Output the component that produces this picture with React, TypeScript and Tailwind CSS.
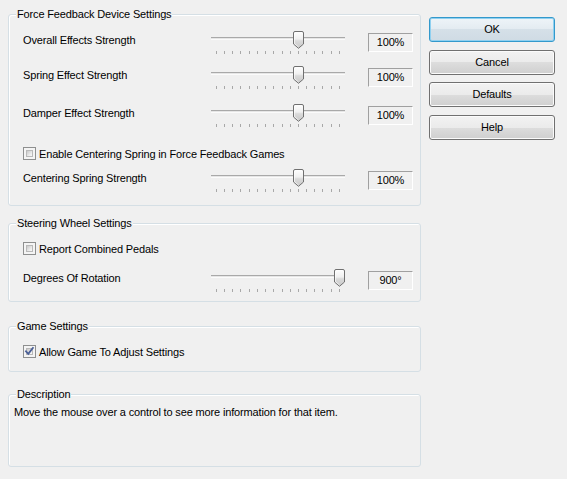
import React from "react";

const TICKS = [5, 13, 21, 29, 38, 46, 54, 62, 71, 79, 87, 95, 103, 111, 120, 128];

function Thumb() {
  return (
    <svg width="11" height="18" viewBox="0 0 11 18" className="absolute top-0">
      <defs>
        <linearGradient id="thg" x1="0" y1="0" x2="0" y2="1">
          <stop offset="0" stopColor="#ffffff" />
          <stop offset="0.45" stopColor="#f0f0f0" />
          <stop offset="0.55" stopColor="#dadada" />
          <stop offset="1" stopColor="#c8c8c8" />
        </linearGradient>
      </defs>
      <path
        d="M0.5 2 Q0.5 0.5 2 0.5 H9 Q10.5 0.5 10.5 2 V13 L5.5 17.3 L0.5 13 Z"
        fill="url(#thg)"
        stroke="#707070"
        strokeWidth="1"
      />
      <path d="M1.5 2 V12.6 L5.5 16" fill="none" stroke="#ffffff" strokeWidth="0.8" opacity="0.8" />
    </svg>
  );
}

function Slider({ pos }: { pos: number }) {
  return (
    <div className="relative w-[134px] h-[24px]">
      <div className="absolute left-0 right-0 top-[6px] h-[3px] border-t border-[#a9a9a9] bg-[#e6e6e6] border-b border-b-[#fbfbfb]" />
      {TICKS.map((t) => (
        <div key={t} className="absolute top-[20px] w-px h-[3px] bg-[#a8a8a8]" style={{ left: t }} />
      ))}
      <div className="absolute top-0" style={{ left: pos }}>
        <Thumb />
      </div>
    </div>
  );
}

function ValueBox({ value }: { value: string }) {
  return (
    <div className="ml-[23px] mt-[2px] w-[45px] h-[19px] border border-t-[#a0a0a0] border-l-[#a0a0a0] border-r-white border-b-white flex items-center justify-center leading-[13px]">
      {value}
    </div>
  );
}

function SliderRow({ label, value, pos, className }: { label: string; value: string; pos: number; className: string }) {
  return (
    <div className={`flex items-start h-[24px] pl-[14px] ${className}`}>
      <div className="w-[188px] mt-[2px] leading-[14px]">{label}</div>
      <Slider pos={pos} />
      <ValueBox value={value} />
    </div>
  );
}

function CheckBox({ checked }: { checked?: boolean }) {
  return (
    <span className="relative inline-flex w-[13px] h-[13px] shrink-0 border border-[#8e8f8f] bg-[#f4f4f4] p-[2px]">
      <span className="block w-full h-full border border-[#b9b9b9] bg-[linear-gradient(135deg,#c9c9c9,#eeeeee_70%,#f8f8f8)]" />
      {checked && (
        <svg width="13" height="13" viewBox="0 0 13 13" className="absolute left-[-1px] top-[-1px]">
          <path d="M3 6.3 L5.3 8.8 L9.9 2.9" fill="none" stroke="#4a5f97" strokeWidth="1.8" strokeLinecap="square" />
        </svg>
      )}
    </span>
  );
}

function CheckRow({ label, checked, className }: { label: string; checked?: boolean; className: string }) {
  return (
    <div className={`flex items-center h-[13px] pl-[14px] ${className}`}>
      <CheckBox checked={checked} />
      <span className="ml-[3px] leading-[14px]">{label}</span>
    </div>
  );
}

function Group({ title, className, children }: { title: string; className: string; children?: React.ReactNode }) {
  return (
    <div className={`relative w-[413px] border border-[#d5dfe5] rounded-[3px] shadow-[inset_1px_1px_0_#ffffff] ${className}`}>
      <span className="absolute left-[7px] top-[-8px] px-[1px] bg-[#f0f0f0] leading-[14px]">{title}</span>
      {children}
    </div>
  );
}

function Button({ label, primary, className }: { label: string; primary?: boolean; className: string }) {
  return (
    <div
      className={`w-[126px] h-[25px] rounded-[3px] flex items-center justify-center ${
        primary
          ? "border border-[#3399cc] bg-[linear-gradient(to_bottom,#eef4f8_0%,#e3ebf1_50%,#d5e0e8_50%,#cfdbe4_100%)] shadow-[inset_0_0_0_1px_#8fd0f0]"
          : "border border-[#707070] bg-[linear-gradient(to_bottom,#f2f2f2_0%,#ebebeb_50%,#dddddd_50%,#cfcfcf_100%)] shadow-[inset_0_0_0_1px_#fbfbfb]"
      } ${className}`}
    >
      {label}
    </div>
  );
}

export default function App() {
  return (
    <div className="w-[567px] h-[479px] bg-[#f0f0f0] flex items-start pl-[8px] pt-[14px] font-['Liberation_Sans',Arial,sans-serif] text-[11px] leading-[13px] tracking-[-0.15px] text-black overflow-hidden">
      <div className="flex flex-col w-[413px]">
        <Group title="Force Feedback Device Settings" className="h-[192px]">
          <SliderRow label="Overall Effects Strength" value="100%" pos={82} className="mt-[16px]" />
          <SliderRow label="Spring Effect Strength" value="100%" pos={82} className="mt-[11px]" />
          <SliderRow label="Damper Effect Strength" value="100%" pos={82} className="mt-[14px]" />
          <CheckRow label="Enable Centering Spring in Force Feedback Games" className="mt-[19px]" />
          <SliderRow label="Centering Spring Strength" value="100%" pos={82} className="mt-[9px]" />
        </Group>
        <Group title="Steering Wheel Settings" className="h-[79px] mt-[17px]">
          <CheckRow label="Report Combined Pedals" className="mt-[18px]" />
          <SliderRow label="Degrees Of Rotation" value="900°" pos={123} className="mt-[14px]" />
        </Group>
        <Group title="Game Settings" className="h-[46px] mt-[24px]">
          <CheckRow label="Allow Game To Adjust Settings" checked className="mt-[18px]" />
        </Group>
        <Group title="Description" className="h-[73px] mt-[22px]">
          <div className="mt-[10px] pl-[5px] leading-[14px]">
            Move the mouse over a control to see more information for that item.
          </div>
        </Group>
      </div>
      <div className="flex flex-col ml-[8px] pt-[3px]">
        <Button label="OK" primary className="" />
        <Button label="Cancel" className="mt-[8px]" />
        <Button label="Defaults" className="mt-[7px]" />
        <Button label="Help" className="mt-[8px]" />
      </div>
    </div>
  );
}
